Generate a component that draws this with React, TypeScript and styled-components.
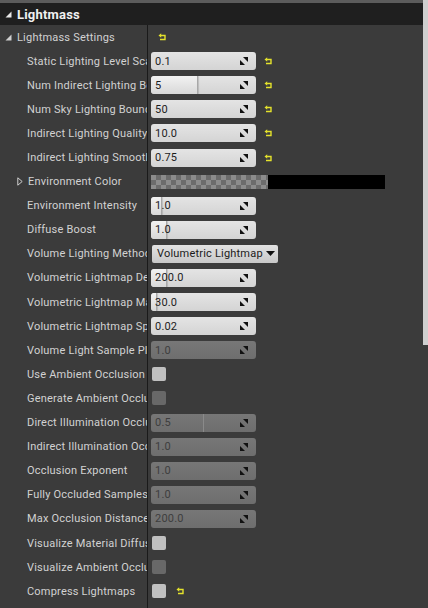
import React from "react";
import styled, { createGlobalStyle } from "styled-components";

const Global = createGlobalStyle`
  html, body { margin: 0; padding: 0; background: #3b3b3b; }
  body { font-family: Roboto, "Noto Sans", "Liberation Sans", sans-serif; }
`;

const Frame = styled.div`
  display: flex;
  width: 428px;
  height: 608px;
  overflow: hidden;
  background: #3b3b3b;
`;

const Main = styled.div`
  flex: 1;
  display: flex;
  flex-direction: column;
  min-width: 0;
`;

const TopStrip = styled.div`
  height: 3px;
  background: #5c5c5c;
`;

const Header = styled.div`
  height: 22px;
  display: flex;
  align-items: center;
  gap: 5px;
  padding-left: 5px;
  background: #1f1f1f;
  color: #f0f0f0;
  font-size: 13px;
  font-weight: 700;
  letter-spacing: 0.2px;
`;

const Body = styled.div`
  flex: 1;
  display: flex;
  flex-direction: column;
  background: #3b3b3b;
  background-image: linear-gradient(to right, transparent 147px, #1a1a1a 147px, #1a1a1a 148px, transparent 148px);
`;

const Row = styled.div`
  height: 24.1px;
  flex-shrink: 0;
  display: grid;
  grid-template-columns: 147px 1fr;
  column-gap: 1px;
  align-items: center;
`;

const Label = styled.div<{ $indent: number }>`
  display: flex;
  align-items: center;
  gap: 5px;
  padding-left: ${p => p.$indent}px;
  color: #d2d2d2;
  font-size: 11px;
  letter-spacing: 0.2px;
  white-space: nowrap;
  overflow: hidden;
`;

const Value = styled.div`
  display: flex;
  align-items: center;
  gap: 8px;
  padding-left: 3px;
`;

const NumBox = styled.div<{ $disabled?: boolean }>`
  position: relative;
  width: 105px;
  height: 18px;
  border-radius: 3px;
  box-sizing: border-box;
  display: flex;
  align-items: center;
  padding-left: 4px;
  font-size: 11px;
  letter-spacing: 0.2px;
  overflow: hidden;
  color: ${p => (p.$disabled ? "#3e3e3e" : "#1c1c1c")};
  background: ${p =>
    p.$disabled
      ? "linear-gradient(#777777, #6e6e6e)"
      : "linear-gradient(#e4e4e4, #d4d4d4)"};
`;

const Fill = styled.div<{ $disabled?: boolean }>`
  position: absolute;
  left: 0;
  top: 0;
  bottom: 0;
  border-radius: 3px 0 0 3px;
  background: ${p =>
    p.$disabled
      ? "transparent"
      : "linear-gradient(#f2f2f2, #d8d8d8)"};
  border-right: 1px solid ${p => (p.$disabled ? "#8a8a8a" : "#a8a8a8")};
  box-shadow: ${p => (p.$disabled ? "none" : "1px 0 1px rgba(0,0,0,0.15)")};
`;

const NumText = styled.span`
  position: relative;
`;

const Drag = styled.svg`
  position: absolute;
  right: 8px;
  top: 5px;
`;

const Swatch = styled.div`
  display: flex;
  height: 14px;
  width: 234px;
`;

const Checker = styled.div`
  width: 117px;
  height: 100%;
  background-color: #8c8c8c;
  background-image:
    linear-gradient(45deg, #6c6c6c 25%, transparent 25%, transparent 75%, #6c6c6c 75%),
    linear-gradient(45deg, #6c6c6c 25%, transparent 25%, transparent 75%, #6c6c6c 75%);
  background-size: 10px 10px;
  background-position: 0 0, 5px 5px;
`;

const Black = styled.div`
  flex: 1;
  background: #000;
`;

const Dropdown = styled.div`
  width: 126px;
  height: 18px;
  box-sizing: border-box;
  border-radius: 2px;
  display: flex;
  align-items: center;
  justify-content: space-between;
  padding: 0 3px 0 5px;
  background: linear-gradient(#e2e2e2, #c8c8c8);
  color: #1a1a1a;
  font-size: 11px;
  letter-spacing: 0.2px;
`;

const Check = styled.div<{ $disabled?: boolean }>`
  width: 14px;
  height: 14px;
  border-radius: 2px;
  margin-left: 1px;
  background: ${p => (p.$disabled ? "#686868" : "#c0c0c0")};
`;

const Scrollbar = styled.div`
  width: 5px;
  display: flex;
  flex-direction: column;
  background: #3b3b3b;
`;

const Thumb = styled.div`
  height: 345px;
  background: #cfcfcf;
`;

const Tri = ({ open, color = "#cfcfcf" }: { open: boolean; color?: string }) =>
  open ? (
    <svg width="7" height="7" viewBox="0 0 7 7">
      <path d="M6.5 0.5 L6.5 6.5 L0.5 6.5 Z" fill={color} />
    </svg>
  ) : (
    <svg width="6" height="9" viewBox="0 0 6 9">
      <path d="M0.8 0.8 L5.2 4.5 L0.8 8.2 Z" fill="none" stroke={color} strokeWidth="1" />
    </svg>
  );

const Reset = () => (
  <svg width="9" height="8" viewBox="0 0 9 8">
    <path d="M2.5 2.5 H7 V6.5 H2" fill="none" stroke="#e4e22c" strokeWidth="1.4" />
    <path d="M0.5 2.5 L3.2 0.2 L3.2 4.8 Z" fill="#e4e22c" />
  </svg>
);

const DragIcon = () => (
  <Drag width="8" height="8" viewBox="0 0 8 8">
    <path d="M3 0 H8 V5 Z" fill="#111" />
    <path d="M0 3 L5 8 H0 Z" fill="#111" />
  </Drag>
);

type Item =
  | { kind: "group"; label: string }
  | { kind: "num"; label: string; value: string; reset?: boolean; fill?: number; disabled?: boolean }
  | { kind: "color"; label: string }
  | { kind: "enum"; label: string; value: string }
  | { kind: "check"; label: string; disabled?: boolean; reset?: boolean };

const items: Item[] = [
  { kind: "group", label: "Lightmass Settings" },
  { kind: "num", label: "Static Lighting Level Scale", value: "0.1", reset: true },
  { kind: "num", label: "Num Indirect Lighting Bounces", value: "5", reset: true, fill: 46 },
  { kind: "num", label: "Num Sky Lighting Bounces", value: "50", reset: true },
  { kind: "num", label: "Indirect Lighting Quality", value: "10.0", reset: true },
  { kind: "num", label: "Indirect Lighting Smoothness", value: "0.75", reset: true },
  { kind: "color", label: "Environment Color" },
  { kind: "num", label: "Environment Intensity", value: "1.0", fill: 10 },
  { kind: "num", label: "Diffuse Boost", value: "1.0", fill: 15 },
  { kind: "enum", label: "Volume Lighting Method", value: "Volumetric Lightmap" },
  { kind: "num", label: "Volumetric Lightmap Detail Cell Size", value: "200.0", fill: 15 },
  { kind: "num", label: "Volumetric Lightmap Maximum Brick Memory Mb", value: "30.0", fill: 5 },
  { kind: "num", label: "Volumetric Lightmap Spherical Harmonic Smoothing", value: "0.02" },
  { kind: "num", label: "Volume Light Sample Placement Scale", value: "1.0", disabled: true },
  { kind: "check", label: "Use Ambient Occlusion" },
  { kind: "check", label: "Generate Ambient Occlusion Material Mask", disabled: true },
  { kind: "num", label: "Direct Illumination Occlusion Fraction", value: "0.5", disabled: true, fill: 52 },
  { kind: "num", label: "Indirect Illumination Occlusion Fraction", value: "1.0", disabled: true },
  { kind: "num", label: "Occlusion Exponent", value: "1.0", disabled: true },
  { kind: "num", label: "Fully Occluded Samples Fraction", value: "1.0", disabled: true },
  { kind: "num", label: "Max Occlusion Distance", value: "200.0", disabled: true },
  { kind: "check", label: "Visualize Material Diffuse" },
  { kind: "check", label: "Visualize Ambient Occlusion", disabled: true },
  { kind: "check", label: "Compress Lightmaps", reset: true },
];

const renderValue = (it: Item) => {
  switch (it.kind) {
    case "group":
      return (
        <Value style={{ paddingLeft: 10 }}>
          <Reset />
        </Value>
      );
    case "num":
      return (
        <Value>
          <NumBox $disabled={it.disabled}>
            {it.fill ? <Fill $disabled={it.disabled} style={{ width: it.fill }} /> : null}
            <NumText>{it.value}</NumText>
            <DragIcon />
          </NumBox>
          {it.reset && <Reset />}
        </Value>
      );
    case "color":
      return (
        <Value>
          <Swatch>
            <Checker />
            <Black />
          </Swatch>
        </Value>
      );
    case "enum":
      return (
        <Value style={{ paddingLeft: 4 }}>
          <Dropdown>
            {it.value}
            <svg width="9" height="5" viewBox="0 0 9 5">
              <path d="M0 0 H9 L4.5 5 Z" fill="#111" />
            </svg>
          </Dropdown>
        </Value>
      );
    case "check":
      return (
        <Value style={{ gap: 10 }}>
          <Check $disabled={it.disabled} />
          {it.reset && <Reset />}
        </Value>
      );
  }
};

export default function App() {
  return (
    <Frame>
      <Global />
      <Main>
        <TopStrip />
        <Header>
          <Tri open color="#e8e8e8" />
          Lightmass
        </Header>
        <Body>
          {items.map((it, i) => (
            <Row key={i}>
              <Label $indent={it.kind === "group" ? 5 : it.kind === "color" ? 17 : 27}>
                {it.kind === "group" && <Tri open />}
                {it.kind === "color" && <Tri open={false} />}
                {it.label}
              </Label>
              {renderValue(it)}
            </Row>
          ))}
        </Body>
      </Main>
      <Scrollbar>
        <Thumb />
      </Scrollbar>
    </Frame>
  );
}
